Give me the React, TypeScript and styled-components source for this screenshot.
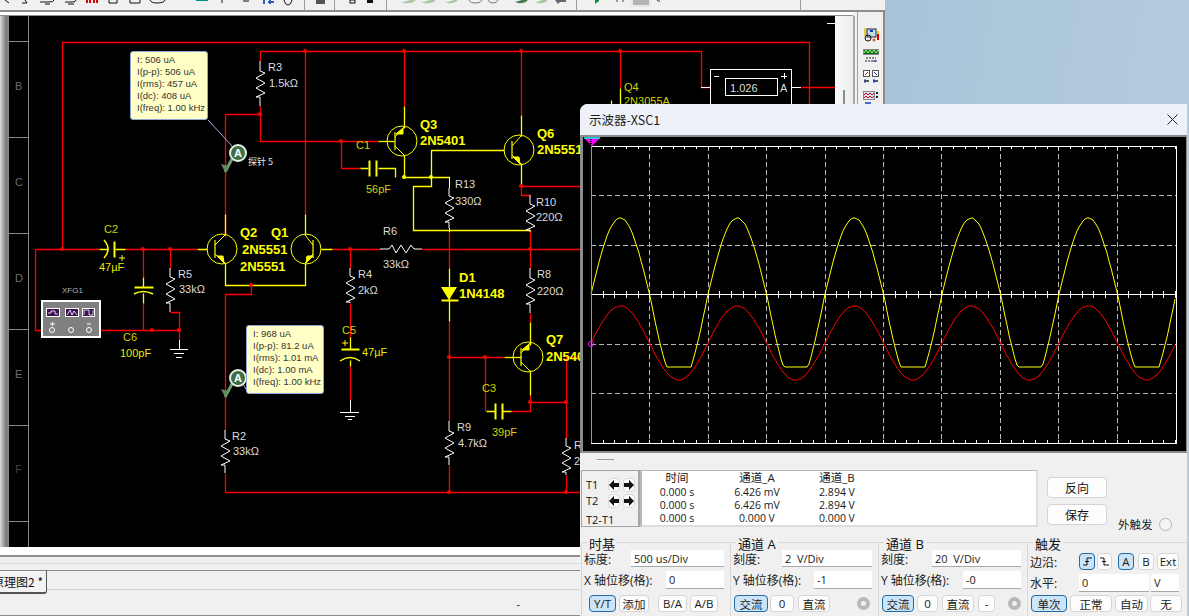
import React from "react";
import styled, { createGlobalStyle } from "styled-components";

const Global = createGlobalStyle`
  html, body { margin: 0; padding: 0; background: #8fb3cf; overflow: hidden; }
  * { box-sizing: border-box; }
`;

const UI = `"Open Sans", "Noto Sans CJK SC", sans-serif`;
const CJK = `"Noto Sans CJK SC", sans-serif`;

const Desktop = styled.div`
  position: relative;
  width: 1189px;
  height: 616px;
  overflow: hidden;
  background: linear-gradient(100deg, #87adca, #b7cedf);
  font-family: ${UI};
`;
const AppWindow = styled.div`
  width: 885px;
  height: 616px;
  background: #f0f0f0;
  display: flex;
  flex-direction: column;
`;
const Toolbar = styled.div`
  height: 10px;
  flex: none;
  display: flex;
  overflow: hidden;
  background: #f0f0f0;
`;
const ToolGroup = styled.div<{ $w: number; $last?: boolean }>`
  width: ${(p) => p.$w}px;
  height: 10px;
  flex: none;
  border-right: ${(p) => (p.$last ? "none" : "1px solid #9a9a9a")};
  svg { display: block; }
`;
const ToolRule = styled.div`
  height: 2px;
  flex: none;
  background: #8c8c8c;
`;
const Body = styled.div`
  flex: 1;
  display: flex;
  min-height: 0;
`;
const MainColumn = styled.div`
  width: 855px;
  flex: none;
  display: flex;
  flex-direction: column;
`;
const DocTop = styled.div`
  height: 4px;
  flex: none;
  background: #fff;
  border-bottom: 1px solid #8f8f8f;
  margin-right: 2px;
`;
const DocRow = styled.div`
  height: 531px;
  flex: none;
  display: flex;
`;
const Gutter = styled.div`
  width: 9px;
  flex: none;
  background: linear-gradient(90deg, #d9d9d9, #777 70%, #8c8c8c);
`;
const Canvas = styled.div`
  position: relative;
  width: 826px;
  height: 531px;
  flex: none;
  background: #000;
  overflow: hidden;
  svg { display: block; }
`;
const ScrollStrip = styled.div`
  width: 18px;
  flex: none;
  background: linear-gradient(90deg, #fafafa, #ececec);
  display: flex;
  justify-content: center;
  padding-top: 74px;
`;
const ScrollThumb = styled.div`
  width: 2px;
  height: 40px;
  background: #8f8f8f;
`;
const ScrollEdge = styled.div`
  width: 2px;
  flex: none;
  background: #a8a8a8;
`;
const SidePanel = styled.div`
  flex: 1;
  margin: 0 0 0 2px;
  border-left: 1px solid #a0a0a0;
  border-right: 2px solid #8a8a8a;
  background: #f0f0f0;
  display: flex;
  flex-direction: column;
  align-items: center;
  gap: 7px;
  padding-top: 16px;
  svg { display: block; flex: none; }
`;
const WhiteBand = styled.div`
  height: 8px;
  flex: none;
  background: #fff;
`;
const GrayRule = styled.div`
  height: 2px;
  flex: none;
  background: #8f8f8f;
`;
const SoftBand = styled.div`
  height: 7px;
  flex: none;
  background: #f0f0f0;
  border-bottom: 1px solid #d8d8d8;
`;
const TabBand = styled.div`
  height: 26px;
  flex: none;
  padding-top: 6px;
  background: #f0f0f0;
  border-bottom: 1px solid #d2d2d2;
`;
const TabRule = styled.div`
  height: 20px;
  display: flex;
  border-top: 1px solid #8a8a8a;
`;
const Tab = styled.div`
  width: 47px;
  height: 24px;
  flex: none;
  margin-top: -1px;
  border-top: 1px solid #8a8a8a;
  border-right: 1px solid #555;
  border-bottom: 2px solid #555;
  border-radius: 0 0 3px 0;
  background: #f3f3f3;
  display: flex;
  justify-content: flex-end;
  align-items: center;
  padding-right: 3px;
  overflow: hidden;
  white-space: nowrap;
  font: 12px ${CJK};
  color: #111;
`;
const StatusBar = styled.div`
  flex: 1;
  display: flex;
  justify-content: flex-end;
  padding: 6px 335px 0 0;
  font: 11px ${UI};
  color: #222;
  border-bottom: 1px solid #8a8a8a;
`;

type Kind = "w" | "y" | "d" | "b" | "g" | "s" | "x" | "f";
const Lbl = styled.text<{ $k: Kind }>`
  font-family: "Liberation Sans", Arial, sans-serif;
  font-size: ${(p) => (p.$k === "b" ? 13 : p.$k === "x" ? 8 : p.$k === "s" ? 9 : 11)}px;
  font-weight: ${(p) => (p.$k === "b" ? 700 : 400)};
  fill: ${(p) =>
    ({ w: "#dcdcdc", y: "#e8e800", d: "#d2d200", b: "#ffff00", g: "#6e6e6e", s: "#e6e6e6", x: "#b4b4b4", f: "#444" })[p.$k]};
`;
const SmallCjk = styled.text`
  font-family: ${CJK};
  font-size: 9px;
  fill: #e8e8e8;
`;
const Tip = styled.div<{ $x: number; $y: number }>`
  position: absolute;
  left: ${(p) => p.$x - 9}px;
  top: ${(p) => p.$y - 16}px;
  width: 78px;
  height: 69px;
  padding: 2px 0 0 6px;
  background: #ffffc6;
  border: 1px solid #8fa6d8;
  border-radius: 3px;
  font: 9.5px/12px "Liberation Sans", Arial, sans-serif;
  color: #333;
  white-space: nowrap;
`;

/* Oscilloscope window */
const Scope = styled.div`
  position: absolute;
  left: 580px;
  top: 104px;
  width: 607px;
  height: 512px;
  background: #f0f0f0;
  border-radius: 8px 0 0 0;
  display: flex;
  flex-direction: column;
  overflow: hidden;
`;
const TitleBar = styled.div`
  height: 31px;
  flex: none;
  background: #eef2f8;
  display: flex;
  align-items: center;
  justify-content: space-between;
  padding: 0 9px 0 9px;
  font: 12.5px ${CJK};
  color: #1c1c1c;
`;
const PlotFrame = styled.div`
  height: 318px;
  flex: none;
  border: 2px solid #8c8c8c;
  border-left-width: 3px;
  border-right-width: 1px;
  background: #000;
  svg { display: block; }
`;
const DashRow = styled.div`
  height: 17px;
  flex: none;
  padding: 6px 0 0 17px;
`;
const Dash = styled.div`
  width: 17px;
  height: 1px;
  background: #9a9a9a;
`;
const CursorRow = styled.div`
  height: 57px;
  flex: none;
  display: flex;
  padding-left: 1px;
`;
const TPanel = styled.div`
  width: 59px;
  flex: none;
  border: 1px solid #a6a6a6;
  border-right-width: 2px;
  padding: 7px 0 0 4px;
  display: flex;
  flex-direction: column;
  font: 11px ${UI};
  color: #111;
`;
const TRow = styled.div<{ $h: number }>`
  height: ${(p) => p.$h}px;
  display: flex;
  align-items: flex-start;
  line-height: 13px;
`;
const TName = styled.span`
  width: 22px;
  flex: none;
`;
const ArrowBtn = styled.div`
  width: 14px;
  height: 14px;
  margin-right: 3px;
  background: #fdfdfd;
  border: 1px solid #d8d8d8;
  border-radius: 4px;
  display: flex;
  align-items: center;
  justify-content: center;
`;
const Measure = styled.div`
  width: 398px;
  flex: none;
  background: #fff;
  border: 2px solid #b8b8b8;
  border-top-width: 1px;
  border-right-color: #dedede;
  border-bottom-color: #dedede;
  display: grid;
  grid-template-columns: 70px 90px 70px;
  grid-template-rows: 15px;
  grid-auto-rows: 13px;
  align-content: start;
  font: 10.5px/13px ${UI};
  color: #1a1a1a;
  text-align: center;
  white-space: nowrap;
`;
const Head = styled.span`
  font-size: 11.5px;
`;
const SideCol = styled.div`
  display: flex;
  flex-direction: column;
  gap: 6px;
  margin: 7px 0 0 9px;
  width: 60px;
  flex: none;
`;
const PlainBtn = styled.div`
  height: 21px;
  background: #fdfdfd;
  border: 1px solid #d4d4d4;
  border-radius: 4px;
  display: flex;
  align-items: center;
  justify-content: center;
  font: 12px ${CJK};
  color: #111;
`;
const ExtTrig = styled.div`
  display: flex;
  align-items: center;
  gap: 6px;
  margin: 46px 0 0 11px;
  height: 16px;
  font: 11.5px ${CJK};
  color: #222;
  white-space: nowrap;
`;
const Radio = styled.div<{ $s: number }>`
  width: ${(p) => p.$s}px;
  height: ${(p) => p.$s}px;
  border-radius: 50%;
  border: 1px solid #b4b4b4;
  background: #f4f4f4;
  flex: none;
`;
const Controls = styled.div`
  flex: 1;
  display: flex;
  margin: 15px 0 0 1px;
  border-top: 1px solid #d8d8d8;
`;
const Group = styled.div<{ $w: number }>`
  position: relative;
  width: ${(p) => p.$w}px;
  flex: none;
  border-left: 1px solid #d8d8d8;
  padding: 7px 6px 0 2px;
`;
const Legend = styled.div`
  position: absolute;
  top: -6px;
  left: 5px;
  padding: 0 2px;
  background: #f0f0f0;
  font: 13px/14px ${UI};
  color: #111;
`;
const Row = styled.div<{ $h: number; $mt: number }>`
  height: ${(p) => p.$h}px;
  margin-top: ${(p) => p.$mt}px;
  display: flex;
  align-items: center;
  justify-content: space-between;
  font: 12px ${UI};
  color: #222;
  white-space: nowrap;
`;
const Field = styled.div<{ $w: number; $ml?: number }>`
  width: ${(p) => p.$w}px;
  height: 100%;
  margin-left: ${(p) => p.$ml ?? 0}px;
  flex: none;
  background: #fff;
  border-bottom: 1px solid #a8a8a8;
  padding-left: 3px;
  font: 11px/17px ${UI};
  color: #222;
  white-space: pre;
`;
const FieldPair = styled.div`
  display: flex;
  height: 18px;
`;
const BtnRow = styled.div<{ $mt: number }>`
  margin-top: ${(p) => p.$mt}px;
  display: flex;
  align-items: center;
  height: 17px;
`;
const Key = styled.div<{ $w: number; $ml?: number; $on?: boolean }>`
  width: ${(p) => p.$w}px;
  height: 17px;
  margin-left: ${(p) => p.$ml ?? 0}px;
  flex: none;
  border-radius: 4px;
  border: ${(p) => (p.$on ? "1px solid #1f6aa8" : "1px solid #d6d6d6")};
  background: ${(p) => (p.$on ? "#cce4f7" : "#fdfdfd")};
  display: flex;
  align-items: center;
  justify-content: center;
  font: 11.5px ${UI};
  color: #1a1a1a;
`;
const Knob = styled.div<{ $ml: number }>`
  width: 13px;
  height: 13px;
  margin-left: ${(p) => p.$ml}px;
  flex: none;
  border-radius: 50%;
  border: 4px solid #b8b8b8;
  background: #f0f0f0;
`;

/* ---------- drawings ---------- */
const R = "#ff0000";
const Y = "#ffff00";
const W = "#ffffff";

const VRes = ({ x, y1, y2, z }: { x: number; y1: number; y2: number; z: number }) => (
  <polyline
    fill="none"
    stroke={W}
    points={`${x},${y1} ${x},${z} ${x + 5},${z + 2} ${x - 4},${z + 7} ${x + 5},${z + 12} ${x - 4},${z + 17} ${x + 5},${z + 22} ${x - 4},${z + 26} ${x},${z + 26} ${x},${y2}`}
  />
);

const Bjt = ({ cx, cy, bar, lead, pnp }: { cx: number; cy: number; bar: number; lead: number; pnp?: boolean }) => {
  const topY = cy - 14;
  const botY = cy + 14;
  const dir = lead > bar ? 1 : -1;
  const ax = lead - dir * 3;
  const arrow = pnp
    ? `${ax - dir * 5},${topY + 7} ${ax + dir * 2},${topY + 1} ${ax + dir * 2},${topY + 7}`
    : `${ax + dir * 2},${botY} ${ax - dir * 5},${botY - 7} ${ax + dir * 1},${botY - 7}`;
  return (
    <g stroke={Y} fill="none">
      <circle cx={cx} cy={cy} r={15} />
      <path d={`M${bar} ${cy - 9}V${cy + 9}`} strokeWidth={1.2} />
      <path d={`M${bar} ${cy - 4}L${lead} ${topY}M${bar} ${cy + 5}L${lead} ${botY}`} />
      <polygon points={arrow} fill={Y} />
    </g>
  );
};

const Node = ({ x, y, c = R }: { x: number; y: number; c?: string }) => <circle cx={x} cy={y} r={2} fill={c} />;

const Probe = ({ x, y }: { x: number; y: number }) => (
  <g>
    <path d={`M${x - 13} ${y + 19}L${x - 6} ${y + 6}`} stroke="#6d9a6d" strokeWidth={3} />
    <path d={`M${x - 13} ${y + 19}L${x - 17} ${y + 11}L${x - 10} ${y + 13}Z`} fill="#5f8d5f" />
    <circle cx={x} cy={y} r={8} fill="#3f6e46" stroke="#e4efe4" strokeWidth={2} />
    <text x={x} y={y + 4} textAnchor="middle" fill="#fff" fontSize={11} fontWeight={700} fontFamily="Liberation Sans">
      A
    </text>
  </g>
);

const redWires = [
  "M62 249V42H809V104",
  "M260 61V51H701V87H710",
  "M305 51V214",
  "M404 51V106",
  "M521 51V115",
  "M620 51V88",
  "M225 237V114H260V141H378",
  "M260 106V114",
  "M341 141V168H360",
  "M35 249H99M35 249V330H52M125 249H197",
  "M89 330H179V340M143 303V330",
  "M143 249V277",
  "M170 249V268",
  "M170 312H179V330",
  "M332 249H380M422 249H580",
  "M350 249V268M350 303V337M350 366V400",
  "M251 285V294H225V430",
  "M225 473V492H580",
  "M449 230V268M449 321V421M449 465V492",
  "M449 357H504",
  "M485 357V411M511 411H530V395",
  "M530 402H566V357H580",
  "M566 402V438M566 475V492",
  "M530 230V268M530 313V322",
  "M521 186H580M521 186V195H530",
  "M801 87H835",
];
const yellowWires = [
  "M378 141H394",
  "M404 106V128M404 155V177H449",
  "M360 168H368M378 168H395V177",
  "M431 177V150H504",
  "M431 177V186H413V230H530",
  "M521 115V136M521 163V186",
  "M620 88V104M611 100V104",
  "M99 249H108M115 249H125",
  "M225 214V235M225 263V285H305V263",
  "M305 214V235",
  "M197 249H207M321 249H332",
  "M143 277V287M143 293V303",
  "M350 337V349M350 360V366",
  "M449 268V321",
  "M530 322V345M530 370V395",
  "M504 357H521",
  "M486 411H495M502 411H511",
];
const yellowPlates = [
  "M369 160V176M376 160V176",
  "M114 241V257",
  "M134 287H153",
  "M341 349H359",
  "M495 403V419M502 403V419",
  "M441 300H458",
];
const labels: [string, number, number, Kind][] = [
  ["R3", 268, 71, "w"], ["1.5kΩ", 269, 87, "w"],
  ["C1", 356, 149, "d"], ["56pF", 366, 193, "d"],
  ["Q3", 420, 129, "b"], ["2N5401", 420, 145, "b"],
  ["Q6", 537, 138, "b"], ["2N5551", 537, 154, "b"],
  ["Q4", 624, 91, "d"], ["2N3055A", 624, 105, "d"],
  ["C2", 104, 233, "d"], ["47µF", 99, 271, "y"],
  ["R5", 178, 278, "w"], ["33kΩ", 179, 293, "w"],
  ["C6", 123, 341, "d"], ["100pF", 120, 357, "y"],
  ["Q2", 240, 237, "b"], ["2N5551", 242, 254, "b"],
  ["Q1", 271, 237, "b"], ["2N5551", 240, 271, "b"],
  ["R4", 358, 278, "w"], ["2kΩ", 358, 294, "w"],
  ["C5", 342, 334, "d"], ["47µF", 362, 356, "y"],
  ["R6", 383, 235, "w"], ["33kΩ", 383, 268, "w"],
  ["R13", 455, 188, "w"], ["330Ω", 455, 205, "w"],
  ["R10", 536, 206, "w"], ["220Ω", 536, 221, "w"],
  ["R8", 537, 278, "w"], ["220Ω", 537, 295, "w"],
  ["D1", 459, 282, "b"], ["1N4148", 459, 298, "b"],
  ["Q7", 546, 344, "b"], ["2N5401", 546, 361, "b"],
  ["C3", 482, 392, "d"], ["39pF", 492, 436, "d"],
  ["R9", 457, 431, "w"], ["4.7kΩ", 458, 447, "w"],
  ["R", 574, 449, "w"], ["2", 574, 465, "w"],
  ["R2", 232, 440, "w"], ["33kΩ", 233, 455, "w"],
  ["B", 15, 90, "g"], ["C", 15, 186, "g"], ["D", 15, 282, "g"], ["E", 15, 378, "g"], ["F", 15, 473, "f"],
  ["XFG1", 62, 293, "x"], ["1.026", 730, 92, "w"], ["A", 780, 92, "w"],
];
const nodes: [number, number][] = [
  [305, 51], [404, 51], [521, 51], [620, 51], [260, 114], [341, 141], [62, 249], [143, 249], [170, 249],
  [350, 249], [152, 330], [179, 330], [251, 285], [521, 186], [530, 249], [449, 357], [485, 357], [530, 402],
  [566, 402], [449, 492], [566, 492],
];

const Schematic = () => (
  <svg width={826} height={531} viewBox="9 16 826 531">
    <g stroke="#8a8a8a" shapeRendering="crispEdges">
      <path d="M28 16V547M9 41H28M9 137H28M9 233H28M9 329H28M9 425H28M9 521H28" fill="none" />
    </g>
    <g fill="none" stroke={R} strokeWidth={1.3} transform="translate(0.5 0.5)">
      {redWires.map((d) => (
        <path key={d} d={d} />
      ))}
    </g>
    <g fill="none" stroke={Y} strokeWidth={1.3} transform="translate(0.5 0.5)">
      {yellowWires.map((d) => (
        <path key={d} d={d} />
      ))}
      {yellowPlates.map((d) => (
        <path key={d} d={d} strokeWidth={2} />
      ))}
    </g>
    <g fill="none" stroke={Y}>
      <path d="M104 240Q112 249 104 258" strokeWidth={1.5} />
      <path d="M134 294Q143 289 153 294" strokeWidth={1.5} />
      <path d="M340 361Q350 354 360 361" strokeWidth={1.5} />
      <path d="M122 255V261M119 258H125M345 340V346M342 343H348" />
    </g>
    <polygon points="441,287 457,287 449,300" fill={Y} />
    <Node x={404} y={177} c={Y} />
    <Node x={431} y={177} c={Y} />

    <VRes x={260} y1={61} y2={106} z={71} />
    <VRes x={170} y1={268} y2={312} z={277} />
    <VRes x={350} y1={268} y2={303} z={276} />
    <VRes x={225} y1={430} y2={473} z={439} />
    <VRes x={449} y1={188} y2={228} z={196} />
    <VRes x={530} y1={195} y2={232} z={204} />
    <VRes x={530} y1={268} y2={313} z={278} />
    <VRes x={449} y1={421} y2={465} z={431} />
    <VRes x={566} y1={438} y2={475} z={446} />
    <path d="M449 177V188M449 228V232" stroke={W} fill="none" shapeRendering="crispEdges" />
    <polyline
      fill="none"
      stroke={W}
      points="380,249 389,249 392,245 396,253 401,245 406,253 411,245 414,249 422,249"
    />
    <path
      d="M179 340V349M170 349H188M174 353H184M176 357H182M350 400V412M340 412H359M345 416H355M348 419H352"
      stroke={W}
      fill="none"
      shapeRendering="crispEdges"
    />

    <Bjt cx={402} cy={141} bar={395} lead={404} pnp />
    <Bjt cx={519} cy={150} bar={512} lead={521} />
    <Bjt cx={222} cy={249} bar={215} lead={225} />
    <Bjt cx={306} cy={249} bar={313} lead={305} />
    <Bjt cx={528} cy={357} bar={521} lead={530} pnp />

    {nodes.map(([x, y]) => (
      <Node key={`${x}-${y}`} x={x} y={y} />
    ))}

    <path d="M208 120L232 146M243 384L247 391" stroke="#9fb0d8" />
    <Probe x={238} y={153} />
    <Probe x={238} y={378} />

    <rect x={42} y={301} width={58} height={36} fill="#808080" stroke="#fff" strokeWidth={2} />
    <g fill="#3b1250" stroke="#fff" shapeRendering="crispEdges">
      <rect x={46.5} y={308.5} width={13} height={8} />
      <rect x={65.5} y={308.5} width={13} height={8} />
      <rect x={82.5} y={308.5} width={12} height={8} />
    </g>
    <path
      d="M48 313H51V311H55V314H58M67 315L70 310L72 315L74 311L77 315M84 315V310H89V315H93V310"
      fill="none"
      stroke="#fff"
      strokeWidth={0.8}
    />
    <g fill="none" stroke="#fff">
      <circle cx={52} cy={330} r={2.5} />
      <circle cx={71} cy={330} r={2.5} />
      <circle cx={89} cy={330} r={2.5} />
      <path d="M50 324H55M52.5 322V326M87 324H91" />
    </g>

    <g fill="none" stroke="#fff" shapeRendering="crispEdges">
      <rect x={710} y={69} width={81} height={50} />
      <rect x={725} y={78} width={52} height={17} />
      <path d="M701 87H710M791 87H801M827 23H835" />
      <path d="M714 76H719M781 76H787M784 73V79" />
    </g>

    {labels.map(([t, x, y, k]) => (
      <Lbl key={`${t}-${x}-${y}`} $k={k} x={x} y={y}>
        {t}
      </Lbl>
    ))}
    <SmallCjk x={248} y={165}>
      探针 5
    </SmallCjk>
  </svg>
);

const yellowAt = (x: number) => {
  const s = Math.sin(((x - 591) * 2 * Math.PI) / 117);
  return s >= 0 ? 294 - 76 * s : Math.min(367, 294 - 92 * s);
};
const redAt = (x: number) => 343 - 37 * Math.sin(((x - 591) * 2 * Math.PI) / 117);
const trace = (f: (x: number) => number) => {
  const pts: string[] = [];
  for (let x = 591; x <= 1175; x += 2) pts.push(`${x},${Math.round(f(x))}`);
  return pts.join(" ");
};

const Plot = () => {
  const vs = Array.from({ length: 9 }, (_, i) => Math.round(591 + 58.4 * (i + 1)));
  const hs = [195, 245, 344, 393];
  const ticks: string[] = [];
  for (let i = 0; i <= 50; i++) {
    const x = Math.round(591 + 11.68 * i);
    ticks.push(`M${x} 291V298`);
    ticks.push(`M${x} 146V149M${x} 440V443`);
  }
  return (
    <svg width={603} height={314} viewBox="583 137 603 314">
      <g shapeRendering="crispEdges" fill="none">
        <g stroke="#b8b8b8" strokeDasharray="5 3">
          {vs.map((x) => (
            <path key={x} d={`M${x} 146V443`} />
          ))}
          {hs.map((y) => (
            <path key={y} d={`M591 ${y}H1176`} />
          ))}
        </g>
        <path d={ticks.join("")} stroke="#fff" />
        <rect x={591} y={146} width={585} height={297} stroke="#fff" />
        <path d="M591 294H1176" stroke="#fff" strokeWidth={1} />
      </g>
      <g fill="none" strokeWidth={1}>
        <polyline points={trace(yellowAt)} stroke={Y} />
        <polyline points={trace(redAt)} stroke={R} />
      </g>
      <path d="M591 146V443" stroke="#30e030" shapeRendering="crispEdges" />
      <polygon points="584,138 600,138 592,146" fill="#ff00ff" />
      <path d="M584 138H600" stroke="#00ffff" strokeWidth={1.5} />
      <path d="M591 139V145" stroke="#000" strokeWidth={2} strokeDasharray="1 1" />
      <circle cx={591} cy={344} r={2.6} fill="none" stroke="#ff00ff" />
    </svg>
  );
};

const Arrow = ({ left }: { left?: boolean }) => (
  <svg width={10} height={10} viewBox="0 0 10 10">
    <path d={left ? "M0 5L5 0V3H10V7H5V10Z" : "M10 5L5 0V3H0V7H5V10Z"} fill="#111" />
  </svg>
);

const Edge = ({ rise }: { rise?: boolean }) => (
  <svg width={11} height={11} viewBox="0 0 11 11">
    <path d={rise ? "M1 9H5V2H10M3 5.5H7" : "M1 2H5V9H10M3 5.5H7"} fill="none" stroke="#111" strokeWidth={1} />
  </svg>
);

const frag = (x: number, w: number, children: React.ReactNode) => (
  <ToolGroup $w={w}>
    <svg width={w - 1} height={10} viewBox={`${x} 0 ${w - 1} 10`}>
      {children}
    </svg>
  </ToolGroup>
);

const DriftIcon = ({ kind }: { kind: number }) => (
  <svg width={16} height={14} viewBox="0 0 16 14">
    {kind === 0 && (
      <g>
        <rect x={4} y={1} width={9} height={8} fill="#bfe0e6" stroke="#222" />
        <path d="M2 0V8M15 3V12" stroke="#e8c000" strokeWidth={1.5} />
        <path d="M15 6V12" stroke="#e00000" strokeWidth={2} />
        <circle cx={5} cy={10} r={3} fill="none" stroke="#111" />
        <circle cx={11} cy={12} r={1.5} fill="#d06020" />
        <path d="M7 3H10" stroke="#0040c0" strokeWidth={2} />
      </g>
    )}
    {kind === 1 && (
      <g>
        <rect x={0.5} y={0.5} width={15} height={5} fill="#0a6a2a" stroke="#888" />
        <path d="M1 4L3 1L5 4L7 1L9 4L11 1L13 4L15 1" stroke="#9cff60" fill="none" />
        <path d="M3 9H13M2 12H14" stroke="#222" strokeDasharray="2 1" />
        <path d="M10 12H14" stroke="#1040c0" />
      </g>
    )}
    {kind === 2 && (
      <g>
        <rect x={0.5} y={0.5} width={6} height={6} fill="#fff" stroke="#555" />
        <rect x={9.5} y={0.5} width={6} height={6} fill="#fff" stroke="#555" />
        <path d="M2 5L5 2" stroke="#d00000" />
        <path d="M11 2L14 5" stroke="#1040c0" />
        <path d="M1 11H6M10 11H15" stroke="#222" strokeWidth={1.5} />
        <path d="M2 9V13M11 9V13" stroke="#1040c0" />
      </g>
    )}
    {kind === 3 && (
      <g>
        <rect x={0.5} y={0.5} width={11} height={8} fill="#d8e4f8" stroke="#888" />
        <path d="M1 4L3 2L5 4L7 2L9 4L11 2M1 7L3 5L5 7L7 5L9 7L11 5" stroke="#d00000" fill="none" />
        <path d="M13 2H15M13 6H15" stroke="#222" strokeWidth={2} />
        <path d="M2 12H8" stroke="#1040c0" strokeWidth={1.5} />
      </g>
    )}
  </svg>
);

export default function App() {
  return (
    <Desktop>
      <Global />
      <AppWindow>
        <Toolbar>
          {frag(0, 305, (
            <g fill="none" stroke="#111">
              <path d="M5 0L9 3M22 3H27L25 0M40 2H48Q54 2 54 0M45 4H50M65 2H72Q76 2 76 0M68 4H74" />
              <path d="M109 0V3H117V0M130 0V3H140V0M150 0Q151 3 157 3Q164 3 165 0" strokeWidth={1} />
              <path d="M87 0V3M90 0V3M94 0V3M97 0V3" stroke="#e00000" strokeWidth={2} />
              <path d="M196 0H208" stroke="#008c8c" strokeWidth={2} />
              <path d="M222 0V3M243 1H249" />
              <path d="M264 0V4M268 2H274M270 0V4" stroke="#3060c0" strokeWidth={2} />
              <path d="M284 0Q285 5 288 5Q291 5 292 0" />
            </g>
          ))}
          {frag(305, 30, <rect x={316} y={0} width={9} height={4} fill="#555" />)}
          {frag(335, 52, (
            <g>
              <rect x={350} y={0} width={5} height={3} fill="none" stroke="#111" />
              <rect x={367} y={0} width={6} height={3} fill="#111" />
            </g>
          ))}
          {frag(387, 190, (
            <g fill="#a9c8a0">
              <path d="M401 3L410 0H416Q412 4 404 3Z" />
              <path d="M421 3L430 0H436Q432 4 424 3Z" />
              <path d="M445 3L454 0H458Q454 4 448 3Z" />
              <path d="M469 0Q470 3 476 3Q481 3 482 0" fill="none" stroke="#777" />
              <path d="M488 0Q489 3 493 3Q497 3 498 0" fill="none" stroke="#777" />
              <path d="M515 2L522 0H528Q524 4 518 3Z" fill="#4a7a50" />
              <path d="M535 3L542 0H548Q544 4 538 3Z" />
              <path d="M555 0H566V2H560L558 4Z" fill="#666" />
            </g>
          ))}
          {frag(577, 224, (
            <g>
              <path d="M595 0V4L599 1V0Z" fill="#109030" />
              <path d="M617 0V2M623 0V2" stroke="#999" strokeWidth={2} />
              <rect x={632} y={-2} width={18} height={8} fill="#b4b4b4" stroke="#e8e8e8" strokeWidth={2} />
              <path d="M657 0Q658 2 660 1" fill="none" stroke="#333" />
            </g>
          ))}
          <ToolGroup $w={83} $last />
        </Toolbar>
        <ToolRule />
        <Body>
          <MainColumn>
            <DocTop />
            <DocRow>
              <Gutter />
              <Canvas>
                <Schematic />
                <Tip $x={130} $y={51}>
                  I: 506 uA
                  <br />
                  I(p-p): 506 uA
                  <br />
                  I(rms): 457 uA
                  <br />
                  I(dc): 408 uA
                  <br />
                  I(freq): 1.00 kHz
                </Tip>
                <Tip $x={246} $y={325}>
                  I: 968 uA
                  <br />
                  I(p-p): 81.2 uA
                  <br />
                  I(rms): 1.01 mA
                  <br />
                  I(dc): 1.00 mA
                  <br />
                  I(freq): 1.00 kHz
                </Tip>
              </Canvas>
              <ScrollStrip>
                <ScrollThumb />
              </ScrollStrip>
              <ScrollEdge />
            </DocRow>
            <WhiteBand />
            <GrayRule />
            <SoftBand />
            <TabBand>
              <TabRule>
                <Tab>原理图2 *</Tab>
              </TabRule>
            </TabBand>
            <StatusBar>-</StatusBar>
          </MainColumn>
          <SidePanel>
            <DriftIcon kind={0} />
            <DriftIcon kind={1} />
            <DriftIcon kind={2} />
            <DriftIcon kind={3} />
          </SidePanel>
        </Body>
      </AppWindow>

      <Scope>
        <TitleBar>
          示波器-XSC1
          <svg width={11} height={11} viewBox="0 0 11 11">
            <path d="M0.5 0.5L10.5 10.5M10.5 0.5L0.5 10.5" stroke="#222" />
          </svg>
        </TitleBar>
        <PlotFrame>
          <Plot />
        </PlotFrame>
        <DashRow>
          <Dash />
        </DashRow>
        <CursorRow>
          <TPanel>
            <TRow $h={18}>
              <TName>T1</TName>
              <ArrowBtn>
                <Arrow left />
              </ArrowBtn>
              <ArrowBtn>
                <Arrow />
              </ArrowBtn>
            </TRow>
            <TRow $h={21}>
              <TName>T2</TName>
              <ArrowBtn>
                <Arrow left />
              </ArrowBtn>
              <ArrowBtn>
                <Arrow />
              </ArrowBtn>
            </TRow>
            <TRow $h={14}>T2-T1</TRow>
          </TPanel>
          <Measure>
            <Head>时间</Head>
            <Head>通道_A</Head>
            <Head>通道_B</Head>
            <span>0.000 s</span>
            <span>6.426 mV</span>
            <span>2.894 V</span>
            <span>0.000 s</span>
            <span>6.426 mV</span>
            <span>2.894 V</span>
            <span>0.000 s</span>
            <span>0.000 V</span>
            <span>0.000 V</span>
          </Measure>
          <SideCol>
            <PlainBtn>反向</PlainBtn>
            <PlainBtn>保存</PlainBtn>
          </SideCol>
          <ExtTrig>
            外触发
            <Radio $s={13} />
          </ExtTrig>
        </CursorRow>
        <Controls>
          <Group $w={149}>
            <Legend>时基</Legend>
            <Row $h={17} $mt={0}>
              标度:
              <Field $w={93}>500 us/Div</Field>
            </Row>
            <Row $h={18} $mt={4}>
              X 轴位移(格):
              <Field $w={58}>0</Field>
            </Row>
            <BtnRow $mt={6}>
              <Key $w={27} $ml={5} $on>
                Y/T
              </Key>
              <Key $w={30} $ml={3}>
                添加
              </Key>
              <Key $w={29} $ml={9}>
                B/A
              </Key>
              <Key $w={28} $ml={3}>
                A/B
              </Key>
            </BtnRow>
          </Group>
          <Group $w={148}>
            <Legend>通道 A</Legend>
            <Row $h={17} $mt={0}>
              刻度:
              <Field $w={90}>2  V/Div</Field>
            </Row>
            <Row $h={18} $mt={4}>
              Y 轴位移(格):
              <Field $w={58}>-1</Field>
            </Row>
            <BtnRow $mt={6}>
              <Key $w={34} $ml={1} $on>
                交流
              </Key>
              <Key $w={24} $ml={2}>
                0
              </Key>
              <Key $w={32} $ml={4}>
                直流
              </Key>
              <Knob $ml={27} />
            </BtnRow>
          </Group>
          <Group $w={149}>
            <Legend>通道 B</Legend>
            <Row $h={17} $mt={0}>
              刻度:
              <Field $w={89}>20  V/Div</Field>
            </Row>
            <Row $h={18} $mt={4}>
              Y 轴位移(格):
              <Field $w={58}>-0</Field>
            </Row>
            <BtnRow $mt={6}>
              <Key $w={32} $ml={1} $on>
                交流
              </Key>
              <Key $w={21} $ml={3}>
                0
              </Key>
              <Key $w={32} $ml={4}>
                直流
              </Key>
              <Key $w={17} $ml={4}>
                -
              </Key>
              <Knob $ml={13} />
            </BtnRow>
          </Group>
          <Group $w={158}>
            <Legend>触发</Legend>
            <Row $h={17} $mt={3}>
              边沿:
              <BtnRow $mt={0}>
                <Key $w={16} $on>
                  <Edge rise />
                </Key>
                <Key $w={15} $ml={2}>
                  <Edge />
                </Key>
                <Key $w={16} $ml={6} $on>
                  A
                </Key>
                <Key $w={16} $ml={4}>
                  B
                </Key>
                <Key $w={22} $ml={3}>
                  Ext
                </Key>
              </BtnRow>
            </Row>
            <Row $h={18} $mt={4}>
              水平:
              <FieldPair>
                <Field $w={70}>0</Field>
                <Field $w={28} $ml={2}>
                  V
                </Field>
              </FieldPair>
            </Row>
            <BtnRow $mt={3}>
              <Key $w={36} $ml={1} $on>
                单次
              </Key>
              <Key $w={42} $ml={3}>
                正常
              </Key>
              <Key $w={33} $ml={3}>
                自动
              </Key>
              <Key $w={32} $ml={2}>
                无
              </Key>
            </BtnRow>
          </Group>
        </Controls>
      </Scope>
    </Desktop>
  );
}
